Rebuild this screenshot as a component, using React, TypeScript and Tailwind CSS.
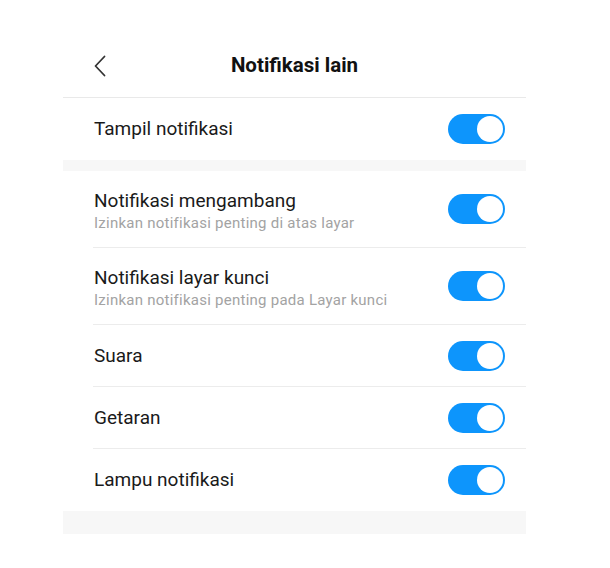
import { useState } from "react";

type Item = { key: string; title: string; sub?: string };

const group2: Item[] = [
  { key: "float", title: "Notifikasi mengambang", sub: "Izinkan notifikasi penting di atas layar" },
  { key: "lock", title: "Notifikasi layar kunci", sub: "Izinkan notifikasi penting pada Layar kunci" },
  { key: "sound", title: "Suara" },
  { key: "vibrate", title: "Getaran" },
  { key: "light", title: "Lampu notifikasi" },
];

const Toggle = ({ on, onClick }: { on: boolean; onClick: () => void }) => (
  <button
    onClick={onClick}
    className={`relative w-[57px] h-[30px] rounded-full shrink-0 ${on ? "bg-[#0d95fc]" : "bg-[#d9d9d9]"}`}
  >
    <span
      className={`absolute top-[2px] w-[26px] h-[26px] rounded-full bg-white ${on ? "right-[2px]" : "left-[2px]"}`}
    />
  </button>
);

const App = () => {
  const [state, setState] = useState<Record<string, boolean>>({
    show: true,
    float: true,
    lock: true,
    sound: true,
    vibrate: true,
    light: true,
  });

  const flip = (k: string) => setState((prev) => ({ ...prev, [k]: !prev[k] }));

  return (
    <div className="w-[610px] h-[568px] bg-white font-['Roboto',sans-serif]">
      <div className="ml-[63px] w-[463px]">
        {/*Header*/}
        <div className="relative h-[98px] pt-[33px] border-b border-[#e9e9e9] flex items-center justify-center">
          <button className="absolute left-[30px] top-[55px] w-[14px] h-[22px] flex items-center justify-center">
            <svg width="12" height="22" viewBox="0 0 12 22" fill="none">
              <polyline points="10.5,1.5 1.5,11 10.5,20.5" stroke="#333333" strokeWidth="1.8" strokeLinecap="round" strokeLinejoin="round" />
            </svg>
          </button>
          <h1 className="text-[20.5px] font-bold text-[#111111] leading-none">Notifikasi lain</h1>
        </div>

        {/*Tampil notifikasi*/}
        <div className="h-[62px] flex items-center justify-between pl-[31px] pr-[21px]">
          <span className="text-[19px] text-[#1a1a1a]">Tampil notifikasi</span>
          <Toggle on={state.show} onClick={() => flip("show")} />
        </div>

        <div className="h-[11px] bg-[#f7f7f7]" />

        <div className="pl-[30px]">
          {group2.map((item, i) => (
            <div
              key={item.key}
              className={`flex items-center justify-between pr-[21px] ${item.sub ? "h-[77px]" : "h-[62px]"} ${i < group2.length - 1 ? "border-b border-[#ececec]" : ""}`}
            >
              <div className={`pl-[1px] ${item.sub ? "pt-[3px]" : ""}`}>
                <div className="text-[19px] leading-[24px] text-[#1a1a1a]">{item.title}</div>
                {item.sub && (
                  <div className="text-[15px] leading-[20px] tracking-[0.25px] text-[#a3a3a3]">{item.sub}</div>
                )}
              </div>
              <Toggle on={state[item.key]} onClick={() => flip(item.key)} />
            </div>
          ))}
        </div>

        <div className="h-[23px] bg-[#f7f7f7]" />
      </div>
    </div>
  );
};

export default App;
